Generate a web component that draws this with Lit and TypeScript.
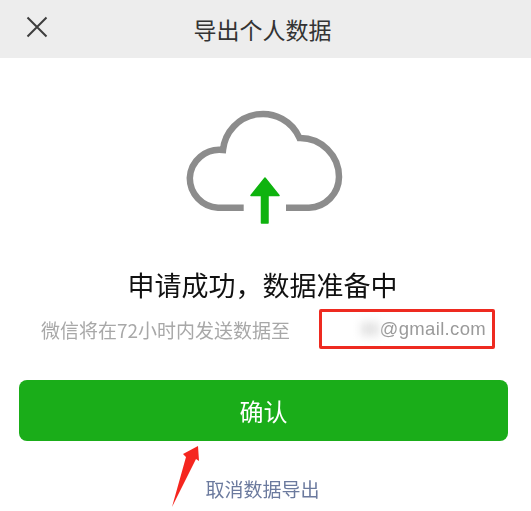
import { LitElement, html, css } from "lit";
import { customElement } from "lit/decorators.js";

@customElement("app-root")
export class AppRoot extends LitElement {
  static styles = css`
    :host {
      display: block;
      position: relative;
      width: 531px;
      height: 511px;
      overflow: hidden;
      background: #fff;
      font-family: "Noto Sans CJK SC", "Liberation Sans", sans-serif;
    }
    .page {
      display: flex;
      flex-direction: column;
      align-items: stretch;
      filter: blur(0.35px);
    }
    .header {
      position: relative;
      height: 58px;
      background: #ededed;
      display: flex;
      align-items: center;
      justify-content: center;
      padding-right: 6px;
      font-size: 23px;
      color: #333;
    }
    .close {
      position: absolute;
      left: 26px;
      top: 16px;
    }
    .cloud {
      display: block;
      margin: 32px auto 0;
    }
    .headline {
      margin-top: 25px;
      text-align: center;
      padding-right: 6px;
      font-size: 27px;
      font-weight: 400;
      line-height: 40px;
      color: #111;
    }
    .notice {
      display: flex;
      align-items: center;
      margin-top: 4px;
      padding-left: 41px;
      font-size: 19px;
      color: #a8a8a8;
      height: 40px;
    }
    .mail {
      box-sizing: border-box;
      margin-left: 29px;
      width: 176px;
      height: 40px;
      border: 3px solid #ee2a20;
      border-radius: 2px;
      display: flex;
      align-items: center;
      justify-content: flex-end;
      padding-right: 6px;
      font-family: "Liberation Sans", sans-serif;
      font-size: 18.5px;
      letter-spacing: 0.35px;
      color: #9a9a9a;
    }
    .smudge {
      width: 18px;
      height: 14px;
      margin-right: 1px;
      background: #e4e4e4;
      filter: blur(4px);
    }
    .button {
      margin: 31px 23px 0 19px;
      height: 61px;
      border-radius: 8px;
      background: #1aad19;
      color: #fff;
      font-size: 24px;
      display: flex;
      align-items: center;
      justify-content: center;
    }
    .link {
      margin-top: 33px;
      text-align: center;
      padding-right: 6px;
      font-size: 19px;
      line-height: 30px;
      color: #6b7a9e;
    }
    .pointer {
      position: absolute;
      left: 165px;
      top: 440px;
    }
  `;

  render() {
    return html`
      <div class="page">
        <div class="header">
          <svg class="close" width="22" height="22" viewBox="0 0 22 22">
            <path d="M1.5 1.5 L20.5 20.5 M20.5 1.5 L1.5 20.5" stroke="#3d3d3d" stroke-width="2" fill="none" />
          </svg>
          导出个人数据
        </div>
        <svg class="cloud" width="190" height="150" viewBox="0 0 190 150">
          <path
            d="M72.7 117.7 H47 A29.7 29.7 0 0 1 18.8 88 A29.7 29.7 0 0 1 52 60 A40 40 0 0 1 128.5 48 A39 39 0 0 1 168 87 A31 31 0 0 1 138 117.7 H115"
            fill="none"
            stroke="#8c8c8c"
            stroke-width="6.5"
          />
          <path
            d="M94 88 L108 105.5 H97 V133 H90.5 V105.5 H80 Z"
            fill="#0fb30f"
            stroke="#0fb30f"
            stroke-width="1.5"
            stroke-linejoin="round"
          />
        </svg>
        <div class="headline">申请成功\uFF0C数据准备中</div>
        <div class="notice">
          <span>微信将在72小时内发送数据至</span>
          <span class="mail"><span class="smudge"></span>@gmail.com</span>
        </div>
        <div class="button">确认</div>
        <div class="link">取消数据导出</div>
      </div>
      <svg class="pointer" width="40" height="70" viewBox="0 0 40 70">
        <path d="M7 67 L21 17 L18 14 L33 6 L34 21 L31 19 Z" fill="#f5261f" />
      </svg>
    `;
  }
}
